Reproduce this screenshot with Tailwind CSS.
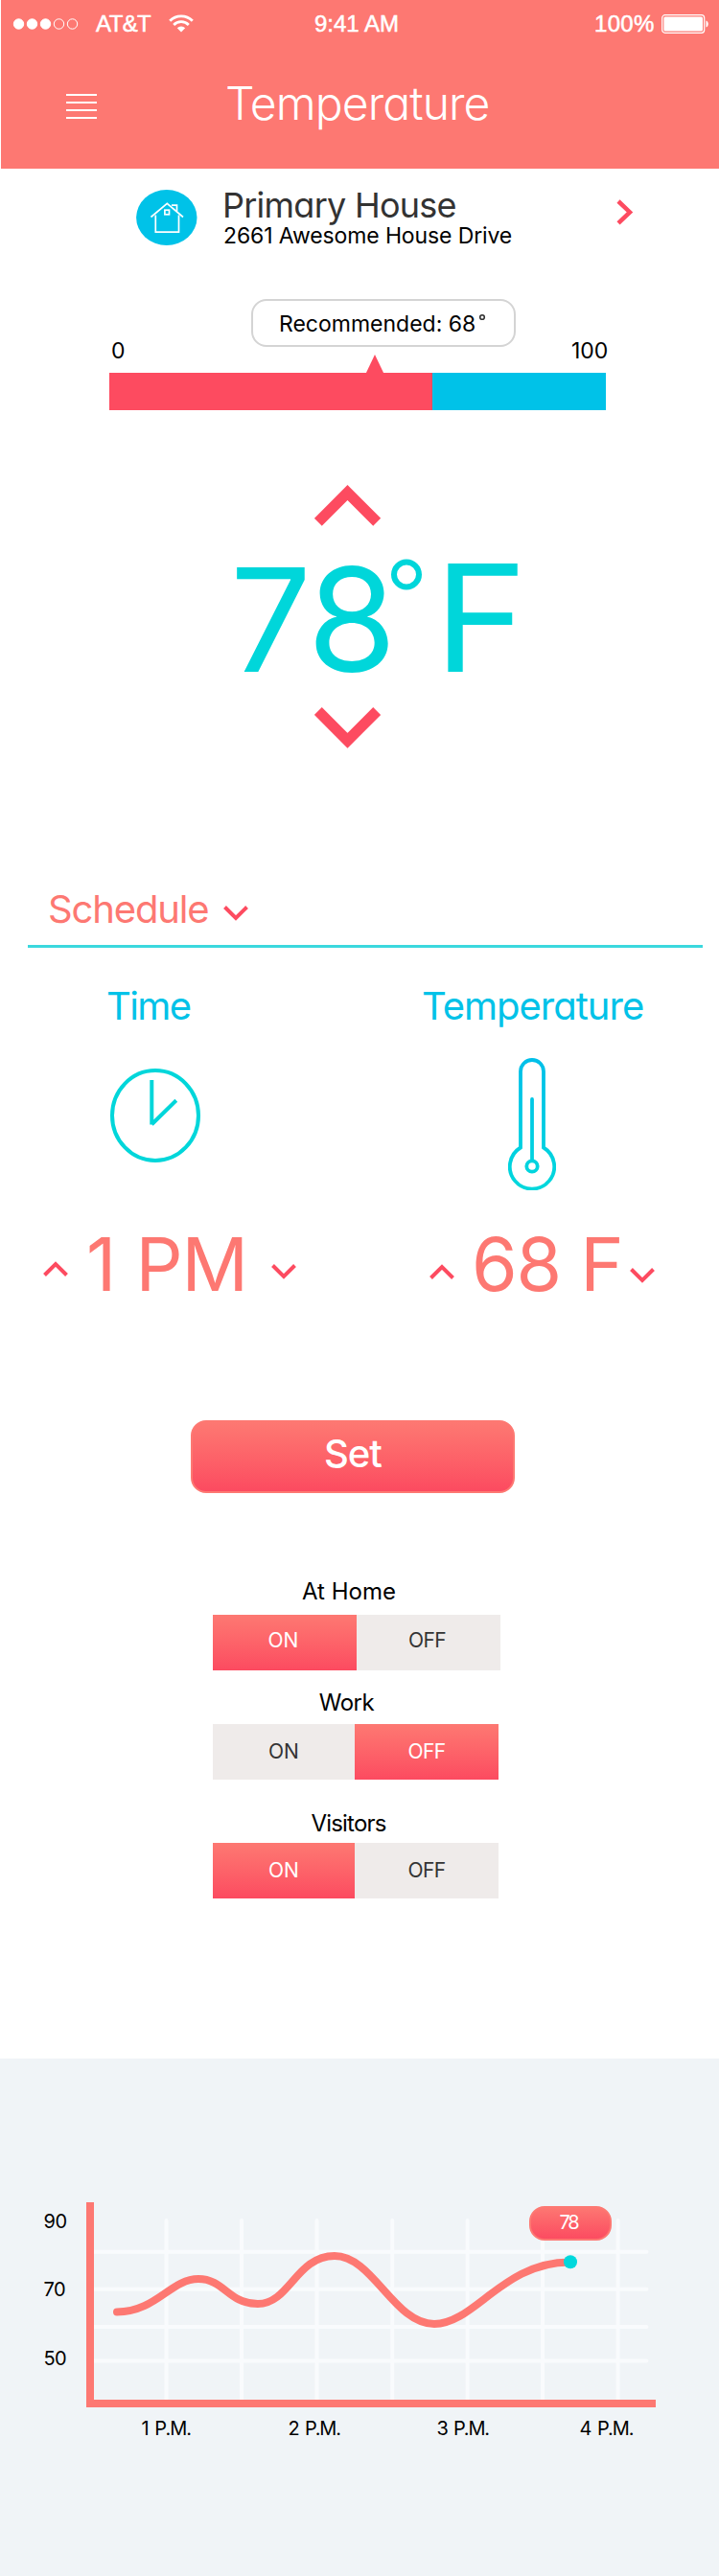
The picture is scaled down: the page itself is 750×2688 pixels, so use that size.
<!DOCTYPE html>
<html lang="en">
<head>
<meta charset="utf-8">
<title>Temperature</title>
<script src="https://cdn.jsdelivr.net/npm/@tailwindcss/browser@4"></script>
</head>
<body class="bg-white">
<main class="w-[750px] h-[2688px] overflow-hidden bg-white flex flex-col text-black font-['Inter','Noto_Sans',sans-serif] [font-feature-settings:'cv11'] whitespace-nowrap">

  <header class="ml-px h-[176px] shrink-0 bg-[#fd7872] text-white">
    <div class="h-[49px] flex items-center font-['Liberation_Sans',Arial,sans-serif] text-[24px] leading-[49px]">
      <svg class="ml-[12px] w-[70px] h-[12px]" viewBox="0 0 70 12" fill="currentColor" stroke="currentColor">
        <circle cx="6.500" cy="6" r="5.200"/><circle cx="20.500" cy="6" r="5.200"/><circle cx="34.500" cy="6" r="5.200"/>
        <circle cx="48.500" cy="6" r="5.200" fill="none"/><circle cx="62.500" cy="6" r="5.200" fill="none"/>
      </svg>
      <span class="ml-[17px] w-[57px] tracking-[-0.6px] [-webkit-text-stroke:0.5px_white]">AT&amp;T</span>
      <svg class="ml-[19px] w-[26px] h-[19px]" viewBox="0 0 26 19" fill="none" stroke="currentColor" stroke-width="2.800">
        <path d="M1.200 6.800a16.500 16.500 0 0 1 23.600 0"/><path d="M5.200 10.900a11 11 0 0 1 15.600 0"/>
        <path d="M13 18.500l-4.200-4.200a6 6 0 0 1 8.400 0z" fill="currentColor" stroke="none"/>
      </svg>
      <span class="ml-[126px] w-[92px] [-webkit-text-stroke:0.5px_white]">9:41 AM</span>
      <span class="ml-[200px] w-[63px] tracking-[0.3px] [-webkit-text-stroke:0.5px_white]">100%</span>
      <svg class="ml-[7px] w-[50px] h-[20px]" viewBox="0 0 50 20">
        <rect x="0.700" y="0.700" width="44" height="18.600" rx="3" fill="none" stroke="currentColor" stroke-width="1.200"/>
        <rect x="2.400" y="2.400" width="40.600" height="15.200" rx="1.500" fill="currentColor"/>
        <path d="M46.500 6.500c3 1 3 6 0 7z" fill="currentColor"/>
      </svg>
    </div>
    <div class="h-[115px] flex items-center">
      <div class="ml-[68px] mt-[9px] w-[32px] flex flex-col gap-[6px]">
        <i class="h-[2px] bg-white"></i><i class="h-[2px] bg-white"></i><i class="h-[2px] bg-white"></i><i class="h-[2px] bg-white"></i>
      </div>
      <h1 class="ml-[134px] pt-[3px] text-[48px] leading-[48px] font-[330] tracking-[-0.9px]">Temperature</h1>
    </div>
  </header>

  <section class="h-[82px] shrink-0 flex items-start">
    <svg class="ml-[142px] mt-[22px] w-[64px] h-[58px]" viewBox="0 0 64 58" fill="none" stroke="#fff" stroke-width="1.700">
      <ellipse cx="31.800" cy="29" rx="31.700" ry="29" fill="#00c2e8" stroke="none"/>
      <path d="M15.500 28.500L32.300 14.300L49 28.500"/><path d="M20.300 26.500V44.200H44.500V26.500"/><path d="M37 16.200H42.500V22.500"/>
      <rect x="29.900" y="21.200" width="4.600" height="4.600"/>
    </svg>
    <div class="ml-[26px] mt-[20px] w-[411px] flex flex-col gap-[2px]">
      <h2 class="text-[36px] leading-[36px] font-[430] text-[#333] tracking-[-0.75px]">Primary House</h2>
      <p class="pl-px text-[23px] leading-[24px] font-[370] tracking-[-0.12px]">2661 Awesome House Drive</p>
    </div>
    <svg class="mt-[32px] w-[18px] h-[27px]" viewBox="0 0 18 27" fill="none" stroke="#fd4b60" stroke-width="4.500"><path d="M2 2L14 13.400L2 24.800"/></svg>
  </section>

  <section class="ml-[114px] mt-[54px] w-[520px] shrink-0">
    <div class="h-[65px] flex items-end text-[23px] leading-[22px] font-[370]">
      <span class="ml-[2px] w-[146px] shrink-0">0</span>
      <div class="mb-[15px] w-[276px] shrink-0 h-[50px] rounded-[16px] border-2 border-[#d4d4d4] pl-[27px] flex items-center"><span class="pt-px">Recommended: 68</span><svg class="ml-[3px] mb-[12px] w-[8px] h-[8px]" viewBox="0 0 8 8"><circle cx="4" cy="4" r="2.300" fill="none" stroke="#333" stroke-width="1.600"/></svg></div>
      <span class="ml-[58px] tracking-[-0.1px]">100</span>
    </div>
    <div class="relative mt-[12px] w-[518px] h-[39px] flex">
      <div class="w-[337px] bg-[#fd4b60]"></div><div class="flex-1 bg-[#00c2e8]"></div>
      <svg class="absolute left-[267px] -top-[19px] w-[20px] h-[21px]" viewBox="0 0 20 21"><path d="M10 0L20 21H0z" fill="#fd4b60"/></svg>
    </div>
  </section>

  <section class="shrink-0 flex flex-col text-[#00d6da]">
    <svg class="ml-[328px] mt-[78px] w-[70px] h-[43px]" viewBox="0 0 70 43" fill="none" stroke="#fd4b60" stroke-width="11.200"><path d="M3.800 38.800L34.500 8L65.200 38.800"/></svg>
    <div class="mt-[22px] h-[150px] flex items-start">
      <span class="ml-[240px] w-[168px] text-[150px] leading-[152px] tracking-[-2px]">78</span>
      <svg class="mt-[12px] w-[33px] h-[33px]" viewBox="0 0 33 33"><circle cx="16" cy="16.500" r="13" fill="none" stroke="currentColor" stroke-width="6"/></svg>
      <span class="ml-[12px] origin-left scale-x-[1.06] text-[155px] leading-[148px]">F</span>
    </div>
    <svg class="ml-[328px] mt-[17px] w-[70px] h-[43px]" viewBox="0 0 70 43" fill="none" stroke="#fd4b60" stroke-width="11.200"><path d="M3.800 4L34.500 34.800L65.200 4"/></svg>
  </section>

  <section class="mt-[147px] shrink-0">
    <div class="h-[40px] ml-[50px] flex items-start">
      <h2 class="w-[183px] text-[40px] leading-[42px] font-[430] text-[#fd7872] tracking-[-1.15px]">Schedule</h2>
      <svg class="mt-[17px] w-[26px] h-[16px]" viewBox="0 0 26 16" fill="none" stroke="#fd4b60" stroke-width="4"><path d="M1.500 1.500L13 13L24.500 1.500"/></svg>
    </div>
    <div class="mt-[18px] ml-[29px] w-[704px] h-[3px] bg-[#3bd8de]"></div>

    <div class="mt-[39px] grid grid-cols-[375px_375px]">
      <div>
        <h3 class="pl-[111px] h-[40px] text-[40px] leading-[43px] font-[430] text-[#00c2e8] tracking-[-1.6px]">Time</h3>
        <svg class="ml-[115px] mt-[47px] w-[94px] h-[98px]" viewBox="0 0 94 98" fill="none" stroke="#00d6da" stroke-width="4">
          <ellipse cx="47" cy="49" rx="45" ry="47"/><path d="M43.300 12V58.500M43.300 58.300L68.800 33.300"/>
        </svg>
        <div class="mt-[67px] h-[78px] flex items-start">
          <svg class="ml-[45px] mt-[36px] w-[26px] h-[16px]" viewBox="0 0 26 16" fill="none" stroke="#fd4b60" stroke-width="4"><path d="M1.500 14.500L13 3L24.500 14.500"/></svg>
          <span class="ml-[19px] w-[193px] text-[77px] leading-[79px] text-[#fd7872] tracking-[-1.2px] [word-spacing:1px]">1 PM</span>
          <svg class="mt-[39px] w-[26px] h-[16px]" viewBox="0 0 26 16" fill="none" stroke="#fd4b60" stroke-width="4"><path d="M1.500 1.500L13 13L24.500 1.500"/></svg>
        </div>
      </div>
      <div>
        <h3 class="pl-[65px] h-[40px] text-[40px] leading-[43px] font-[430] text-[#00c2e8] tracking-[-1px]">Temperature</h3>
        <svg class="ml-[155px] mt-[36px] w-[50px] h-[138px]" viewBox="0 0 50 138" fill="none" stroke="url(#tg)" stroke-width="3.800">
          <defs><linearGradient id="tg" gradientUnits="userSpaceOnUse" x1="0" y1="0" x2="0" y2="138"><stop offset="0" stop-color="#00bfe9"/><stop offset="1" stop-color="#00d8dc"/></linearGradient></defs>
          <path d="M13 93.500V14a12 12 0 0 1 24 0V93.500A23.200 23.200 0 1 1 13 93.500z"/>
          <circle cx="25" cy="113" r="5.700"/><path d="M25.010 107V43" stroke-linecap="round"/>
        </svg>
        <div class="mt-[38px] h-[78px] flex items-start">
          <svg class="ml-[73px] mt-[39px] w-[26px] h-[16px]" viewBox="0 0 26 16" fill="none" stroke="#fd4b60" stroke-width="4"><path d="M1.500 14.500L13 3L24.500 14.500"/></svg>
          <span class="ml-[18px] w-[165px] text-[77px] leading-[79px] text-[#fd7872] tracking-[-1.300px]">68 F</span>
          <svg class="mt-[43px] w-[26px] h-[16px]" viewBox="0 0 26 16" fill="none" stroke="#fd4b60" stroke-width="4"><path d="M1.500 1.500L13 13L24.500 1.500"/></svg>
        </div>
      </div>
    </div>
  </section>

  <button class="mt-[124px] ml-[199px] w-[338px] h-[76px] pb-[6px] shrink-0 rounded-[16px] border-2 border-[#fd7872] bg-linear-to-b from-[#fd7872] to-[#fc4a60] text-white text-[40px] leading-[40px] font-medium tracking-[-1px]">Set</button>

  <section class="mt-[91px] ml-[222px] w-[300px] shrink-0 text-[21px]">
    <p class="w-[284px] text-center text-[24px] leading-[24px] font-[370]">At Home</p>
    <div class="mt-[12px] h-[58px] flex leading-[54px] text-center">
      <span class="w-[150px] pr-[3px] bg-linear-to-b from-[#fd7872] to-[#fc4a60] text-white">ON</span><span class="w-[150px] pr-[3px] bg-[#efebea] text-[#333] font-[370] tracking-[-0.7px]">OFF</span>
    </div>
    <p class="mt-[22px] w-[279px] text-center text-[24px] leading-[24px] font-[370] tracking-[-0.5px]">Work</p>
    <div class="mt-[10px] h-[58px] flex leading-[58px] text-center">
      <span class="w-[148px] bg-[#efebea] text-[#333] font-[370]">ON</span><span class="w-[150px] bg-linear-to-b from-[#fd7872] to-[#fc4a60] text-white tracking-[-0.7px]">OFF</span>
    </div>
    <p class="mt-[34px] w-[283px] text-center text-[24px] leading-[24px] font-[370] tracking-[-0.8px]">Visitors</p>
    <div class="mt-[8px] h-[58px] flex leading-[58px] text-center">
      <span class="w-[148px] bg-linear-to-b from-[#fd7872] to-[#fc4a60] text-white">ON</span><span class="w-[150px] bg-[#efebea] text-[#333] font-[370] tracking-[-0.7px]">OFF</span>
    </div>
  </section>

  <section class="mt-[167px] h-[540px] shrink-0 bg-[#f0f4f7]">
    <svg class="block w-[750px] h-[540px] text-[20px] font-[370]" viewBox="0 0 750 540">
      <defs><linearGradient id="bg" x1="0" y1="0" x2="0" y2="1"><stop offset="0" stop-color="#fd7872"/><stop offset="1" stop-color="#fc4a60"/></linearGradient></defs>
      <g stroke="#f9fbfd" stroke-width="4" stroke-linecap="round">
        <path d="M173.500 169V356M252 169V356M330.500 169V356M409.200 169V356M487.600 169V356M566 169V356M644.600 169V356"/>
        <path d="M98 201.700H674.500M98 240.700H674.500M98 280H674.500M98 315.500H674.500"/>
      </g>
      <path d="M94 150V360H684" fill="none" stroke="#fd7872" stroke-width="8"/>
      <path d="M122 264.400C163 264.400 178 230 207 230C234 230 238 256 269 256C302 256 309 206 349 206C389 206 411 277 453 277C495 277 525 212 595 212.500" fill="none" stroke="#fd7872" stroke-width="8" stroke-linecap="round"/>
      <circle cx="595" cy="212.300" r="7" fill="#00d8dc"/>
      <rect x="553" y="155" width="84" height="34" rx="15" fill="url(#bg)" stroke="#fd7872" stroke-width="2"/>
      <text x="583.500" y="178.200" fill="#fff" textLength="21">78</text>
      <g fill="#000">
        <text x="45.500" y="177.300" textLength="24.500">90</text><text x="45.500" y="248.300" textLength="23">70</text><text x="45.500" y="320.300" textLength="24">50</text>
        <g class="[word-spacing:2px]"><text x="147.500" y="393" textLength="52.500">1 P.M.</text><text x="300.500" y="393" textLength="55.500">2 P.M.</text><text x="455.500" y="393" textLength="55.500">3 P.M.</text><text x="604.500" y="393" textLength="57">4 P.M.</text></g>
      </g>
    </svg>
  </section>
</main>
</body>
</html>
